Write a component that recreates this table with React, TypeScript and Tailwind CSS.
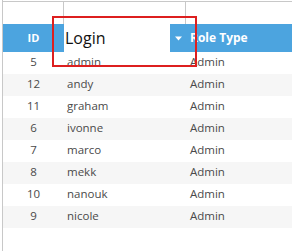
import React from "react";

const rows: [string, string][] = [
  ["5", "admin"],
  ["12", "andy"],
  ["11", "graham"],
  ["6", "ivonne"],
  ["7", "marco"],
  ["8", "mekk"],
  ["10", "nanouk"],
  ["9", "nicole"],
];

export default function App() {
  return (
    <div
      className="relative w-[298px] h-[251px] bg-white overflow-hidden"
      style={{ fontFamily: '"Open Sans", "Noto Sans", sans-serif' }}
    >
      <div className="ml-[2px] w-[290px] h-full border-l border-[#c8c8c8] flex flex-col">
        {/* top empty row */}
        <div className="mt-[1px] h-[23px] border-t border-[#c8c8c8] flex">
          <div className="w-[61px] border-r border-[#c8c8c8]" />
          <div className="w-[122px] border-r border-[#c8c8c8]" />
          <div className="flex-1" />
        </div>
        {/* header */}
        <div className="h-[28px] bg-[#4ca4df] flex items-center">
          <div className="w-[61px] text-center text-white font-bold text-[11px]">ID</div>
          <div className="w-[106px] h-full bg-white flex items-center pl-[1px]">
            <span className="text-[16px] text-[#111] leading-none">Login</span>
          </div>
          <div className="w-[16px] flex items-center justify-center">
            <svg width="7" height="5" viewBox="0 0 7 5">
              <path d="M0 0.5 L7 0.5 L3.5 4.5 Z" fill="white" />
            </svg>
          </div>
          <div className="flex-1 pl-[4px] text-white font-bold text-[12px]">Role Type</div>
        </div>
        {/* rows */}
        {rows.map(([id, login], i) => (
          <div
            key={id}
            className={`h-[22px] pb-[3px] flex items-center text-[11.5px] text-[#4a4a4a] ${
              i % 2 === 1 ? "bg-[#f6f6f6]" : "bg-white"
            }`}
          >
            <div className="w-[61px] text-center">{id}</div>
            <div className="w-[122px] pl-[3px]">{login}</div>
            <div className="flex-1 pl-[4px]">Admin</div>
          </div>
        ))}
      </div>
      {/* red highlight box */}
      <div className="absolute left-[52px] top-[16px] w-[145px] h-[51px] border-2 border-[#dd1f1f]" />
    </div>
  );
}
